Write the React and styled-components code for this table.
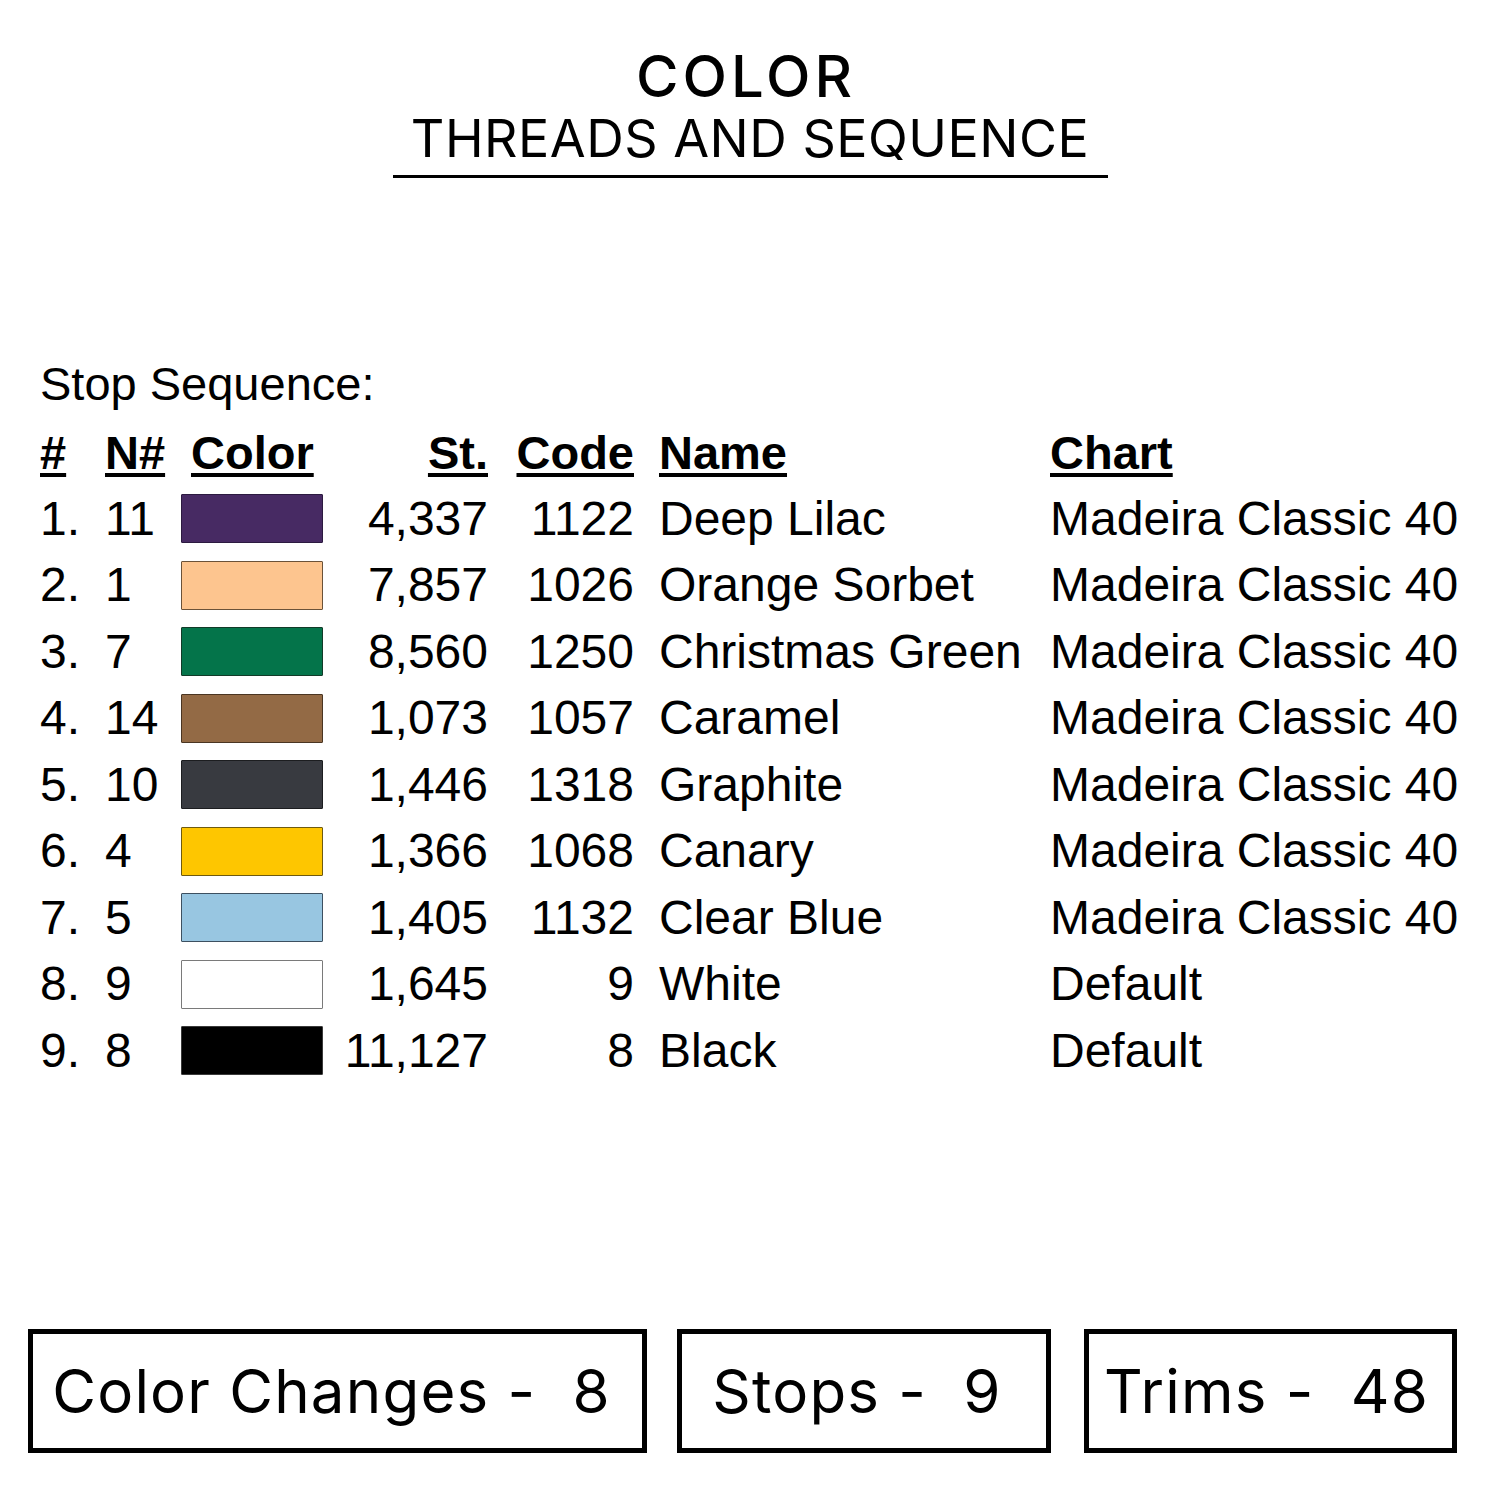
import React from "react";
import styled, { createGlobalStyle } from "styled-components";

const Global = createGlobalStyle`
  html, body { margin: 0; padding: 0; background: #fff; }
  body { font-family: "Liberation Sans", Arial, sans-serif; color: #000; }
`;

const Page = styled.div`
  width: 1500px;
  height: 1500px;
  background: #fff;
  display: flex;
  flex-direction: column;
  overflow: hidden;
`;

const Heading = styled.header`
  display: flex;
  flex-direction: column;
  align-items: center;
  padding-top: 47px;
`;

const Title = styled.h1`
  margin: 0;
  font-family: Inter, "Open Sans", sans-serif;
  font-weight: 500;
  font-size: 58px;
  line-height: 58px;
  letter-spacing: 4px;
  color: #000;
  transform: translateX(-4px);
`;

const Subtitle = styled.h2`
  margin: 8px 0 0;
  width: 715px;
  text-align: center;
  font-family: Inter, "Open Sans", sans-serif;
  font-weight: 400;
  font-size: 52px;
  line-height: 52px;
  letter-spacing: 0.5px;
  color: #000;
  padding-bottom: 10px;
  border-bottom: 3px solid #000;
`;

const Sequence = styled.section`
  margin-top: 180px;
  padding-left: 40px;
  font-family: "Liberation Sans", Arial, sans-serif;
  font-size: 48px;
  color: #000;
`;

const Caption = styled.div`
  line-height: 52px;
  height: 52px;
  font-size: 47px;
`;

const Table = styled.div`
  margin-top: 10px;
  display: grid;
  grid-template-columns: 65px 76px 142px 165px 146px 416px auto;
  grid-auto-rows: 66.5px;
  grid-template-rows: 65.5px;
  align-items: center;
`;

const Cell = styled.div`
  line-height: 52px;
  white-space: nowrap;
  text-align: ${(p) => (p.$right ? "right" : "left")};
  padding-left: ${(p) => p.$indent || 0}px;
`;

const HeadCell = styled(Cell)`
  font-weight: 700;
  font-size: 47px;
  & > span {
    text-decoration: underline;
    text-decoration-thickness: 4px;
    text-underline-offset: 4px;
  }
`;

const Swatch = styled.div`
  width: 142px;
  height: 49px;
  box-sizing: border-box;
  background: ${(p) => p.$fill};
  border: 1.5px solid ${(p) => p.$edge};
  border-radius: 1px;
`;

const Totals = styled.div`
  margin-top: auto;
  margin-bottom: 47px;
  padding-left: 28px;
  display: flex;
`;

const TotalBox = styled.div`
  box-sizing: border-box;
  width: ${(p) => p.$w}px;
  margin-left: ${(p) => p.$gap || 0}px;
  height: 124px;
  border: 5px solid #000;
  display: flex;
  align-items: center;
  justify-content: center;
  padding-right: ${(p) => p.$shift || 0}px;
  font-family: Inter, "Open Sans", sans-serif;
  font-size: 60px;
  font-weight: 400;
  letter-spacing: 1.2px;
  white-space: pre;
  color: #000;
`;

const rows = [
  ["1.", "11", "#472a63", "#2c1a40", "4,337", "1122", "Deep Lilac", "Madeira Classic 40"],
  ["2.", "1", "#fdc58f", "#6b5238", "7,857", "1026", "Orange Sorbet", "Madeira Classic 40"],
  ["3.", "7", "#04744a", "#123a28", "8,560", "1250", "Christmas Green", "Madeira Classic 40"],
  ["4.", "14", "#936a45", "#4a3522", "1,073", "1057", "Caramel", "Madeira Classic 40"],
  ["5.", "10", "#383a40", "#1c1d20", "1,446", "1318", "Graphite", "Madeira Classic 40"],
  ["6.", "4", "#fec600", "#6e5a10", "1,366", "1068", "Canary", "Madeira Classic 40"],
  ["7.", "5", "#98c6e1", "#3d5060", "1,405", "1132", "Clear Blue", "Madeira Classic 40"],
  ["8.", "9", "#ffffff", "#7a7a7a", "1,645", "9", "White", "Default"],
  ["9.", "8", "#000000", "#3a3a3a", "11,127", "8", "Black", "Default"],
];

export default function App() {
  return (
    <Page>
      <Global />
      <Heading>
        <Title>COLOR</Title>
        <Subtitle>THREADS AND SEQUENCE</Subtitle>
      </Heading>
      <Sequence>
        <Caption>Stop Sequence:</Caption>
        <Table>
          <HeadCell><span>#</span></HeadCell>
          <HeadCell><span>N#</span></HeadCell>
          <HeadCell $indent={10}><span>Color</span></HeadCell>
          <HeadCell $right><span>St.</span></HeadCell>
          <HeadCell $right><span>Code</span></HeadCell>
          <HeadCell $indent={25}><span>Name</span></HeadCell>
          <HeadCell><span>Chart</span></HeadCell>
          {rows.map(([n, nn, fill, edge, st, code, name, chart]) => (
            <React.Fragment key={n}>
              <Cell>{n}</Cell>
              <Cell>{nn}</Cell>
              <Cell><Swatch $fill={fill} $edge={edge} /></Cell>
              <Cell $right>{st}</Cell>
              <Cell $right>{code}</Cell>
              <Cell $indent={25}>{name}</Cell>
              <Cell>{chart}</Cell>
            </React.Fragment>
          ))}
        </Table>
      </Sequence>
      <Totals>
        <TotalBox $w={619} $shift={12}>{"Color Changes -  8"}</TotalBox>
        <TotalBox $w={374} $gap={30} $shift={14}>{"Stops -  9"}</TotalBox>
        <TotalBox $w={373} $gap={33} $shift={8}>{"Trims -  48"}</TotalBox>
      </Totals>
    </Page>
  );
}
